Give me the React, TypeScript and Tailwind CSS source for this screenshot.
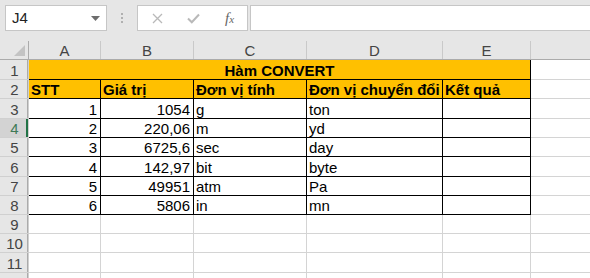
import React from "react";

const COLS = [
  { key: "A", w: "w-[72px]" },
  { key: "B", w: "w-[93px]" },
  { key: "C", w: "w-[113px]" },
  { key: "D", w: "w-[136px]" },
  { key: "E", w: "w-[88px]" },
];

const ROW_H = [
  "h-[20px]",
  "h-[19px]",
  "h-[20px]",
  "h-[19px]",
  "h-[19px]",
  "h-[20px]",
  "h-[19px]",
  "h-[19px]",
  "h-[19px]",
  "h-[19px]",
  "h-[20px]",
  "h-[19px]",
];

const DATA = [
  ["1", "1054", "g", "ton", ""],
  ["2", "220,06", "m", "yd", ""],
  ["3", "6725,6", "sec", "day", ""],
  ["4", "142,97", "bit", "byte", ""],
  ["5", "49951", "atm", "Pa", ""],
  ["6", "5806", "in", "mn", ""],
];

const HEAD = ["STT", "Giá trị", "Đơn vị tính", "Đơn vị chuyển đổi", "Kết quả"];

function RowHeader({ n, h }: { n: number; h: string }) {
  const active = n === 4;
  return (
    <div
      className={`${h} w-[29px] shrink-0 relative flex items-end justify-center border-b border-r border-[#d0d0d0] ${
        active ? "bg-[#d3d3d3] text-[#3f7a57]" : "bg-[#e6e6e6] text-[#444]"
      }`}
    >
      <span className="leading-[16px] pl-[1px]">{n}</span>
      <div className="absolute right-0 top-0 h-full w-px bg-[#ababab]" />
      {active && <div className="absolute right-0 top-0 h-full w-[2px] bg-[#217346]" />}
    </div>
  );
}

function Cell({
  w,
  edge,
  align = "left",
  bold,
  fill,
  children,
}: {
  w: string;
  edge: "black" | "grid";
  align?: "left" | "right" | "center";
  bold?: boolean;
  fill?: boolean;
  children?: React.ReactNode;
}) {
  const justify = align === "right" ? "justify-end pr-[3px]" : align === "center" ? "justify-center" : "justify-start pl-[2px]";
  return (
    <div
      className={`${w} shrink-0 flex items-end overflow-hidden whitespace-nowrap border-b border-r ${justify} ${
        edge === "black" ? "border-black" : "border-[#d4d4d4]"
      } ${fill ? "bg-[#ffc000]" : "bg-white"} ${bold ? "font-bold" : ""}`}
    >
      <span className="leading-[16px]">{children}</span>
    </div>
  );
}

function Toolbar() {
  return (
    <div className="h-[41px] bg-[#e6e6e6] flex items-start pt-[5px] pl-[5px]">
      <div className="w-[102px] h-[26px] bg-white border border-[#c6c6c6] flex items-center justify-between pl-[6px] pr-[6px]">
        <span className="text-[15px] text-[#222]">J4</span>
        <svg width="9" height="5" viewBox="0 0 9 5">
          <path d="M0 0 H9 L4.5 5 Z" fill="#6d6d6d" />
        </svg>
      </div>
      <div className="w-[30px] h-[26px] flex flex-col items-center justify-center gap-[2px]">
        <div className="w-[2px] h-[2px] bg-[#b0b0b0]" />
        <div className="w-[2px] h-[2px] bg-[#b0b0b0]" />
        <div className="w-[2px] h-[2px] bg-[#b0b0b0]" />
      </div>
      <div className="w-[111px] h-[26px] bg-white border border-[#c6c6c6] flex items-center">
        <div className="w-[37px] flex justify-center pl-[1px]">
          <svg width="11" height="11" viewBox="0 0 11 11">
            <path d="M1 1 L10 10 M10 1 L1 10" stroke="#b9b9b9" strokeWidth="1.3" />
          </svg>
        </div>
        <div className="w-[37px] flex justify-center">
          <svg width="13" height="11" viewBox="0 0 13 11">
            <path d="M1 5.5 L4.8 9.3 L12 1.5" stroke="#b9b9b9" strokeWidth="2" fill="none" />
          </svg>
        </div>
        <div className="w-[35px] flex justify-center">
          <span className="font-['Liberation_Serif',serif] italic text-[#666] text-[15px] leading-none">
            f<span className="text-[11px]">x</span>
          </span>
        </div>
      </div>
      <div className="flex-1 ml-[2px] h-[26px] bg-white border-y border-l border-[#c6c6c6]" />
    </div>
  );
}

function ColumnHeader() {
  return (
    <div className="h-[19px] flex bg-[#e6e6e6] border-b border-[#ababab]">
      <div className="w-[29px] shrink-0 relative border-r border-[#ababab]">
        <svg className="absolute right-[3px] bottom-[3px]" width="11" height="11" viewBox="0 0 11 11">
          <path d="M11 0 V11 H0 Z" fill="#c3c3c3" />
        </svg>
      </div>
      {COLS.map((c) => (
        <div key={c.key} className={`${c.w} shrink-0 flex items-end justify-center border-r border-[#c9c9c9] text-[#444]`}>
          <span className="leading-[17px]">{c.key}</span>
        </div>
      ))}
      <div className="flex-1" />
    </div>
  );
}

export default function App() {
  return (
    <div className="w-[590px] h-[278px] overflow-hidden bg-white font-['Liberation_Sans',Arial,sans-serif] text-[15px] text-black">
      <Toolbar />
      <ColumnHeader />
      {/* row 1: merged title */}
      <div className="flex">
        <RowHeader n={1} h={ROW_H[0]} />
        <div className={`${ROW_H[0]} w-[502px] shrink-0 flex items-end justify-center bg-[#ffc000] border-b border-r border-black font-bold`}>
          <span className="leading-[16px]">Hàm CONVERT</span>
        </div>
        <div className="flex-1 border-b border-[#d4d4d4]" />
      </div>
      {/* row 2: headings */}
      <div className={`flex ${ROW_H[1]}`}>
        <RowHeader n={2} h={ROW_H[1]} />
        {COLS.map((c, i) => (
          <Cell key={c.key} w={c.w} edge="black" bold fill>
            {HEAD[i]}
          </Cell>
        ))}
        <div className="flex-1 border-b border-[#d4d4d4]" />
      </div>
      {DATA.map((r, ri) => (
        <div key={ri} className={`flex ${ROW_H[ri + 2]}`}>
          <RowHeader n={ri + 3} h={ROW_H[ri + 2]} />
          {COLS.map((c, i) => (
            <Cell key={c.key} w={c.w} edge="black" align={i < 2 ? "right" : "left"}>
              {r[i]}
            </Cell>
          ))}
          <div className="flex-1 border-b border-[#d4d4d4]" />
        </div>
      ))}
      {[9, 10, 11, 12].map((n) => (
        <div key={n} className={`flex ${ROW_H[n - 1]}`}>
          <RowHeader n={n} h={ROW_H[n - 1]} />
          {COLS.map((c) => (
            <Cell key={c.key} w={c.w} edge="grid" />
          ))}
          <div className="flex-1 border-b border-[#d4d4d4]" />
        </div>
      ))}
    </div>
  );
}
